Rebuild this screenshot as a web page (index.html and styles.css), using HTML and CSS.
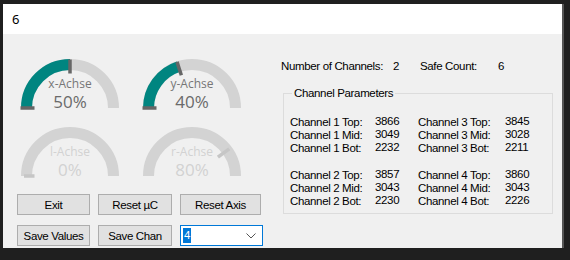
FILE: index.html
```html
<!DOCTYPE html>
<html>
<head>
<meta charset="utf-8">
<link rel="stylesheet" href="styles.css">
</head>
<body>
<div class="window">
  <div class="titlebar">6</div>
  <div class="content">
    <div class="left">
      <div class="gauges">
        <svg class="gauge" width="100" height="52" viewBox="0 0 100 52">
          <path class="arc-bg" d="M6.5 49 A43.5 43.5 0 0 1 93.5 49"/>
          <path class="arc-on" d="M6.5 49 A43.5 43.5 0 0 1 50 5.5"/>
          <line class="tick" x1="0.5" y1="49" x2="14.5" y2="49"/>
          <line class="tick" x1="50" y1="0.5" x2="50" y2="14.5"/>
          <text class="g-name" x="50" y="29">x-Achse</text>
          <text class="g-val" x="50" y="49">50%</text>
        </svg>
        <svg class="gauge" width="100" height="52" viewBox="0 0 100 52">
          <path class="arc-bg" d="M6.5 49 A43.5 43.5 0 0 1 93.5 49"/>
          <path class="arc-on" d="M6.5 49 A43.5 43.5 0 0 1 36.56 7.63"/>
          <line class="tick" x1="0.5" y1="49" x2="14.5" y2="49"/>
          <line class="tick" x1="35.01" y1="2.87" x2="39.34" y2="16.19"/>
          <text class="g-name" x="50" y="29">y-Achse</text>
          <text class="g-val" x="50" y="49">40%</text>
        </svg>
        <svg class="gauge off" width="100" height="52" viewBox="0 0 100 52">
          <path class="arc-bg" d="M6.5 49 A43.5 43.5 0 0 1 93.5 49"/>
          <line class="tick" x1="4" y1="49" x2="14.5" y2="49"/>
          <text class="g-name" x="50" y="29">l-Achse</text>
          <text class="g-val" x="50" y="49">0%</text>
        </svg>
        <svg class="gauge off" width="100" height="52" viewBox="0 0 100 52">
          <path class="arc-bg" d="M6.5 49 A43.5 43.5 0 0 1 93.5 49"/>
          <line class="tick" x1="87.24" y1="21.9" x2="75.9" y2="30.1"/>
          <text class="g-name" x="50" y="29">r-Achse</text>
          <text class="g-val" x="50" y="49">80%</text>
        </svg>
      </div>
      <div class="buttons">
        <div class="btn-row">
          <button class="btn w72">Exit</button>
          <button class="btn w73">Reset µC</button>
          <button class="btn w80">Reset Axis</button>
        </div>
        <div class="btn-row">
          <button class="btn w72">Save Values</button>
          <button class="btn w73">Save Chan</button>
          <div class="combo"><span class="sel">4</span><svg class="chev" width="10" height="6" viewBox="0 0 10 6"><polyline points="0.5,0.5 5,5 9.5,0.5"/></svg></div>
        </div>
      </div>
    </div>
    <div class="right">
      <div class="stats">
        <span class="s-lab1">Number of Channels:</span>
        <span class="s-val1">2</span>
        <span class="s-lab2">Safe Count:</span>
        <span class="s-val2">6</span>
      </div>
      <fieldset class="group">
        <legend>Channel Parameters</legend>
        <div class="params">
          <span class="p-lab">Channel 1 Top:</span><span class="p-val">3866</span><span class="p-lab">Channel 3 Top:</span><span class="p-val">3845</span>
          <span class="p-lab">Channel 1 Mid:</span><span class="p-val">3049</span><span class="p-lab">Channel 3 Mid:</span><span class="p-val">3028</span>
          <span class="p-lab">Channel 1 Bot:</span><span class="p-val">2232</span><span class="p-lab">Channel 3 Bot:</span><span class="p-val">2211</span>
          <span class="spacer"></span>
          <span class="p-lab">Channel 2 Top:</span><span class="p-val">3857</span><span class="p-lab">Channel 4 Top:</span><span class="p-val">3860</span>
          <span class="p-lab">Channel 2 Mid:</span><span class="p-val">3043</span><span class="p-lab">Channel 4 Mid:</span><span class="p-val">3043</span>
          <span class="p-lab">Channel 2 Bot:</span><span class="p-val">2230</span><span class="p-lab">Channel 4 Bot:</span><span class="p-val">2226</span>
        </div>
      </fieldset>
    </div>
  </div>
</div>
</body>
</html>
```
FILE: styles.css
```css
html, body {
  margin: 0;
  padding: 0;
  background: #1f1f1f;
  width: 570px;
  height: 260px;
  overflow: hidden;
}
.window {
  margin: 4px 0 0 3px;
  width: 561px;
  height: 244px;
  background: #f0f0f0;
  border-right: 2px solid #555;
  box-sizing: border-box;
  display: flex;
  flex-direction: column;
  font-family: "Liberation Sans", Arial, sans-serif;
  font-size: 11.5px;
  letter-spacing: -0.35px;
  white-space: nowrap;
  color: #000;
}
.titlebar {
  height: 30px;
  background: #fff;
  padding-left: 9px;
  line-height: 30px;
  font-family: "Noto Sans", "Open Sans", sans-serif;
  font-size: 13px;
  letter-spacing: 0;
  color: #000;
}
.content {
  display: flex;
  flex: 1;
}
.left {
  width: 264px;
  padding-left: 14px;
  box-sizing: border-box;
}
.gauges {
  display: grid;
  grid-template-columns: 100px 100px;
  column-gap: 22px;
  row-gap: 16px;
  margin: 25px 0 0 3px;
}
.gauge {
  display: block;
  overflow: visible;
  letter-spacing: 0;
}
.arc-bg {
  fill: none;
  stroke: #d3d3d3;
  stroke-width: 11;
}
.arc-on {
  fill: none;
  stroke: #008580;
  stroke-width: 11;
}
.tick {
  stroke: #666;
  stroke-width: 3.5;
}
.g-name {
  font-family: "Open Sans", "Noto Sans", sans-serif;
  font-size: 12px;
  fill: #777;
  text-anchor: middle;
}
.g-val {
  font-family: "Open Sans", "Noto Sans", sans-serif;
  font-size: 17px;
  fill: #6a6a6a;
  text-anchor: middle;
}
.gauge.off .tick {
  stroke: #c6c6c6;
}
.gauge.off .g-name,
.gauge.off .g-val {
  fill: #d2d2d2;
}
.buttons {
  margin-top: 15px;
  display: flex;
  flex-direction: column;
  gap: 10px;
}
.btn-row {
  display: flex;
  gap: 8px;
  align-items: flex-start;
}
.btn {
  height: 21px;
  background: #e1e1e1;
  border: 1px solid #adadad;
  font-family: "Liberation Sans", Arial, sans-serif;
  font-size: 11.5px;
  letter-spacing: -0.35px;
  color: #000;
  padding: 0;
  margin: 0;
}
.w72 { width: 73px; }
.w73 { width: 74px; }
.w80 { width: 81px; }
.combo {
  width: 83px;
  height: 21px;
  box-sizing: border-box;
  border: 1px solid #0078d7;
  background: #fff;
  display: flex;
  align-items: center;
  justify-content: space-between;
  padding: 0 6px 0 2px;
}
.sel {
  background: #0078d7;
  color: #fff;
  line-height: 15px;
  padding: 0 1px;
}
.chev polyline {
  fill: none;
  stroke: #555;
  stroke-width: 1;
}
.right {
  flex: 1;
  padding-left: 14px;
}
.stats {
  display: flex;
  margin-top: 25px;
  line-height: 15px;
}
.s-lab1 { width: 112px; }
.s-val1 { width: 27px; }
.s-lab2 { width: 78px; }
.group {
  margin: 12px 0 0 2px;
  width: 270px;
  height: 128px;
  box-sizing: border-box;
  border: 1px solid #dcdcdc;
  padding: 15px 0 0 6px;
}
.group legend {
  padding: 0 2px;
  margin-left: 2px;
  line-height: 15px;
}
.params {
  display: grid;
  grid-template-columns: 85px 43px 87px auto;
  line-height: 13px;
}
.p-val {
  position: relative;
  top: -1px;
}
.spacer {
  grid-column: 1 / -1;
  height: 14px;
}
```
